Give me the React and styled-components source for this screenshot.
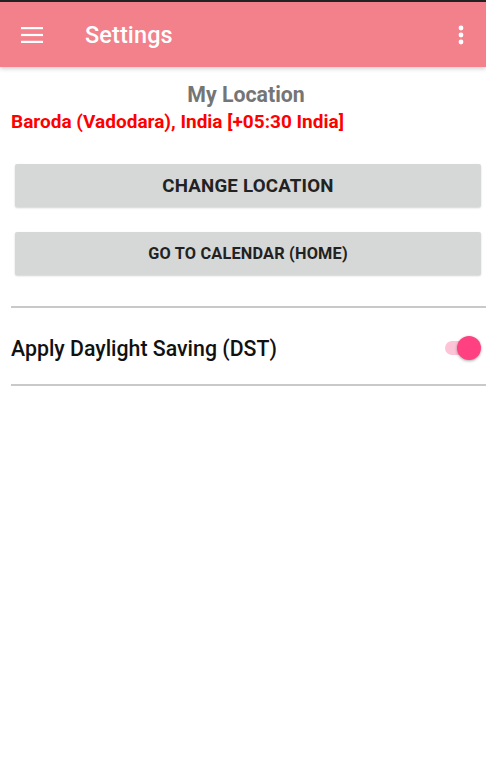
import React from "react";
import styled, { createGlobalStyle } from "styled-components";

const Global = createGlobalStyle`
  html, body { margin: 0; padding: 0; background: #fff; }
  body { font-family: Roboto, "Noto Sans", sans-serif; }
`;

const Page = styled.div`
  width: 486px;
  height: 780px;
  background: #fff;
  border-top: 2px solid #222;
  box-sizing: border-box;
  overflow: hidden;
`;

const AppBar = styled.header`
  height: 65px;
  background: #f3818b;
  display: flex;
  align-items: center;
  padding: 0 22px 0 21px;
  box-shadow: 0 2px 4px rgba(0, 0, 0, 0.18);
  position: relative;
`;

const Title = styled.h1`
  margin: 0 0 0 42px;
  flex: 1;
  color: #fff;
  font-size: 23.5px;
  font-weight: 500;
  letter-spacing: 0.1px;
`;

const IconBtn = styled.span`
  display: flex;
  width: ${(p) => p.w}px;
  height: 24px;
  align-items: center;
  justify-content: center;
`;

const Content = styled.main`
  padding: 14px 5px 0 11px;
  display: flex;
  flex-direction: column;
`;

const Heading = styled.div`
  text-align: center;
  color: #757575;
  font-size: 21.3px;
  font-weight: 700;
  line-height: 28px;
`;

const LocationText = styled.div`
  color: #ff0000;
  font-size: 19px;
  font-weight: 700;
  line-height: 26px;
`;

const Button = styled.button`
  margin: ${(p) => p.mt}px 0 0 4px;
  height: 43px;
  width: 466px;
  border: none;
  border-radius: 2px;
  background: #d6d7d7;
  box-shadow: 0 1px 2px rgba(0, 0, 0, 0.18);
  font-family: Roboto, sans-serif;
  font-weight: 700;
  font-size: ${(p) => p.fs}px;
  color: #222;
  letter-spacing: 0.2px;
`;

const Divider = styled.hr`
  margin: ${(p) => p.mt}px -5px 0 0;
  border: none;
  height: 2px;
  background: #c9c9c9;
`;

const Row = styled.div`
  height: 76px;
  display: flex;
  align-items: center;
  justify-content: space-between;
  padding: 4px 4px 0 0;
  box-sizing: border-box;
`;

const RowLabel = styled.span`
  font-size: 21.3px;
  font-weight: 500;
  color: #111;
`;

const Switch = styled.span`
  position: relative;
  width: 30px;
  height: 14px;
  border-radius: 7px;
  background: #fdc4d8;
  margin-right: 2px;
`;

const Thumb = styled.span`
  position: absolute;
  right: -6px;
  top: -5px;
  width: 24px;
  height: 24px;
  border-radius: 50%;
  background: #ff4081;
  box-shadow: 0 1px 3px rgba(0, 0, 0, 0.35);
`;

export default function App() {
  return (
    <Page>
      <Global />
      <AppBar>
        <IconBtn w={22}>
          <svg width="22" height="16" viewBox="0 0 22 16">
            <rect x="0" y="0" width="22" height="2.2" fill="#fff" />
            <rect x="0" y="6.9" width="22" height="2.2" fill="#fff" />
            <rect x="0" y="13.8" width="22" height="2.2" fill="#fff" />
          </svg>
        </IconBtn>
        <Title>Settings</Title>
        <IconBtn w={6}>
          <svg width="6" height="20" viewBox="0 0 6 20">
            <circle cx="3" cy="3" r="2.4" fill="#fff" />
            <circle cx="3" cy="10" r="2.4" fill="#fff" />
            <circle cx="3" cy="17" r="2.4" fill="#fff" />
          </svg>
        </IconBtn>
      </AppBar>
      <Content>
        <Heading>My Location</Heading>
        <LocationText>Baroda (Vadodara), India [+05:30 India]</LocationText>
        <Button mt={29} fs={18.7}>CHANGE LOCATION</Button>
        <Button mt={25} fs={16.3}>GO TO CALENDAR (HOME)</Button>
        <Divider mt={31} />
        <Row>
          <RowLabel>Apply Daylight Saving (DST)</RowLabel>
          <Switch>
            <Thumb />
          </Switch>
        </Row>
        <Divider mt={0} />
      </Content>
    </Page>
  );
}
